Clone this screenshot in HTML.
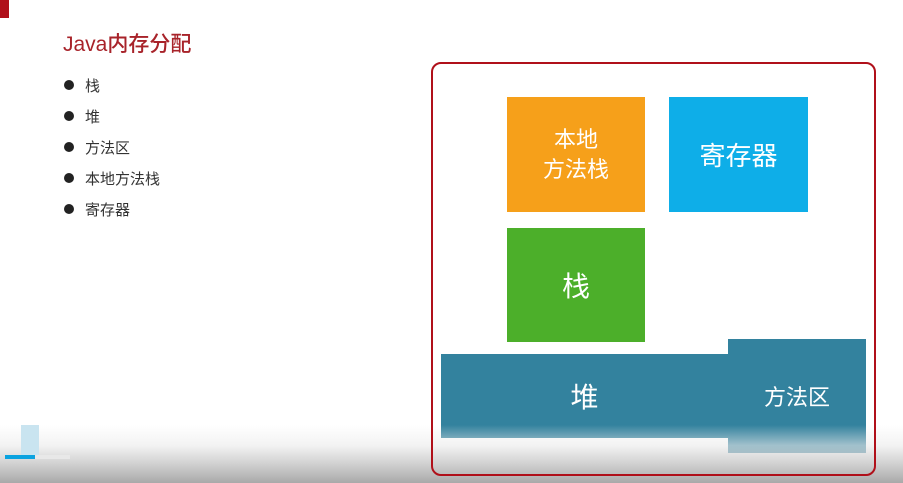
<!DOCTYPE html>
<html><head><meta charset="utf-8"><style>
body{margin:0;width:903px;height:483px;overflow:hidden;background:#fff;position:relative;font-family:"Liberation Sans","Noto Sans CJK SC",sans-serif}
.a{position:absolute}
.box{color:#fff;display:flex;align-items:center;justify-content:center;text-align:center}
li{list-style:none;position:relative;height:31px;font-size:15px;color:#333}
li:before{content:"";position:absolute;left:-21px;top:5px;width:10px;height:10px;border-radius:50%;background:#222}
</style></head><body>
<div class="a" style="left:0;top:0;width:9px;height:18px;background:#b0101a"></div>
<div class="a" style="left:63px;top:28px;font-size:21px;color:#a8232a;font-weight:500">Java内存分配</div>
<ul class="a" style="left:85px;top:75px;margin:0;padding:0">
<li>栈</li><li>堆</li><li>方法区</li><li>本地方法栈</li><li>寄存器</li></ul>
<div class="a box" style="left:507px;top:97px;width:138px;height:115px;background:#f6a01a;font-size:22px;line-height:30px">本地<br>方法栈</div>
<div class="a box" style="left:669px;top:97px;width:139px;height:115px;background:#0eaee8;font-size:26px">寄存器</div>
<div class="a box" style="left:507px;top:228px;width:138px;height:114px;background:#4caf2a;font-size:28px">栈</div>
<div class="a box" style="left:441px;top:354px;width:287px;height:84px;background:#33829e;font-size:28px">堆</div>
<div class="a box" style="left:728px;top:339px;width:138px;height:114px;background:#33829e;font-size:22px">方法区</div>
<div class="a" style="left:0;top:425px;width:903px;height:58px;background:linear-gradient(rgba(255,255,255,0),rgba(235,235,235,.6) 35%,rgba(200,200,200,.8) 65%,rgba(160,160,160,.9))"></div>
<div class="a" style="left:431px;top:62px;width:441px;height:410px;border:2px solid #b0101a;border-radius:10px"></div>
<div class="a" style="left:21px;top:425px;width:18px;height:32px;background:#c9e4f0"></div>
<div class="a" style="left:5px;top:455px;width:65px;height:4px;background:#e8e8e8"></div>
<div class="a" style="left:5px;top:455px;width:30px;height:4px;background:#0aa3e0"></div>
</body></html>
